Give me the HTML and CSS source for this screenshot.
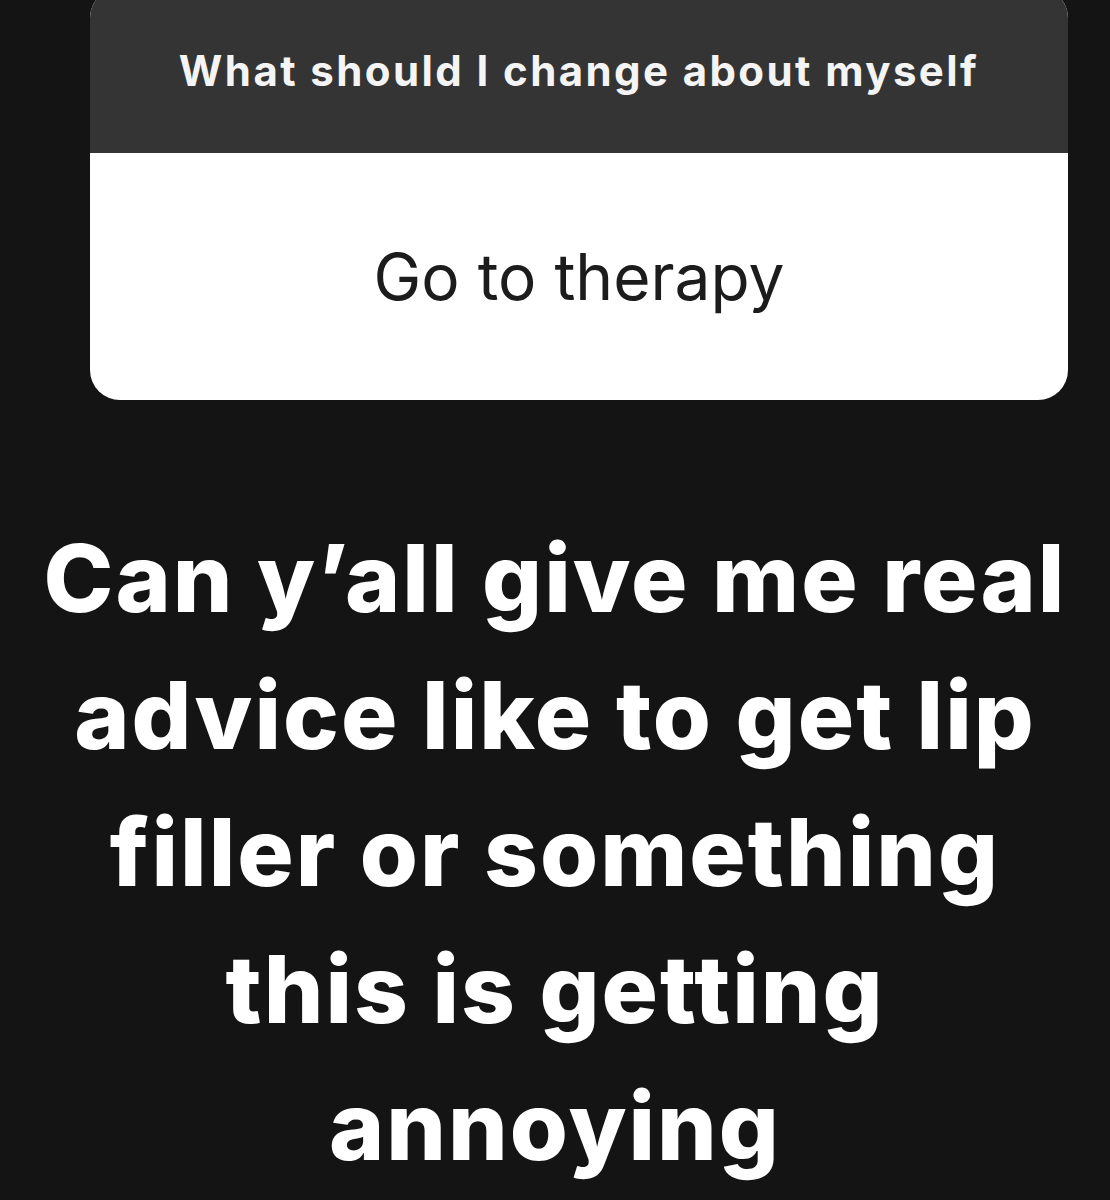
FILE: index.html
```html
<!DOCTYPE html>
<html lang="en">
<head>
    <meta charset="UTF-8">
    <meta name="viewport" content="width=device-width, initial-scale=1.0">
    <title>Question sticker</title>
    <link rel="stylesheet" href="styles.css">
</head>
<body>
    <div class="story">
        <!-- Question sticker -->
        <div class="question">
            <div class="question-title">What should I change about myself</div>
            <div class="question-answer">Go to therapy</div>
        </div>

        <p class="caption">Can y’all give me real advice like to get lip filler or something this is getting annoying</p>
    </div>
</body>
</html>
```

FILE: styles.css
```css
body {
    margin: 0;
    background-color: #141414;
    font-family: Inter, "Liberation Sans", Arial, sans-serif;
}
.story {
    width: 1110px;
    height: 1200px;
    overflow: hidden;
}
/* Question sticker card */
.question {
    width: 978px;
    margin: -12px 0 0 90px;
    border-radius: 30px;
    overflow: hidden;
    background-color: #fff;
}
.question-title {
    height: 165px;
    display: flex;
    align-items: center;
    justify-content: center;
    background-color: #343434;
    color: #f4f4f4;
    font-weight: bold;
    font-size: 42px;
    letter-spacing: 2.4px;
}
.question-answer {
    height: 247px;
    display: flex;
    align-items: center;
    justify-content: center;
    color: #1c1c1c;
    font-size: 64px;
}
/* Big caption text */
.caption {
    margin: 110px 36px 0;
    color: #fff;
    text-align: center;
    font-weight: 800;
    font-size: 94px;
    line-height: 137px;
    letter-spacing: 2px;
}
```
